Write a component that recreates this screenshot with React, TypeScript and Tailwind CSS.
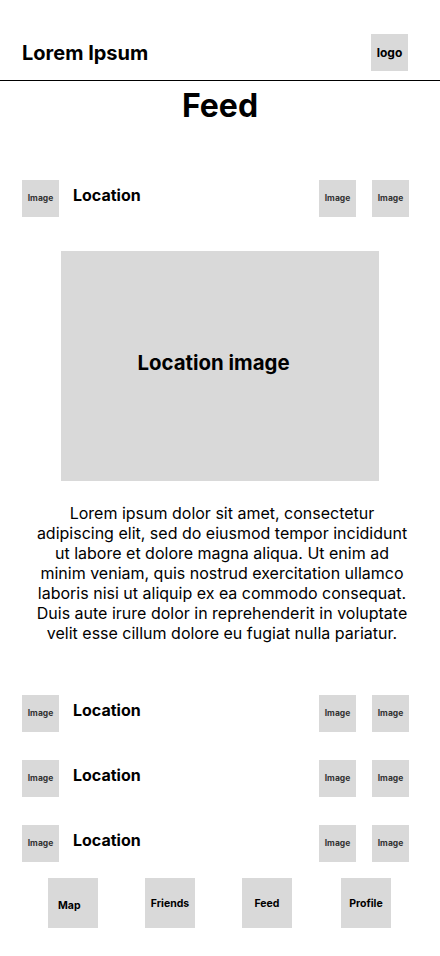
import React from 'react';

const font = { fontFamily: 'Inter, "Noto Sans", sans-serif' };

const Thumb = () => (
  <div className="w-[37px] h-[37px] bg-[#d9d9d9] flex items-center justify-center shrink-0">
    <span className="text-[8.5px] font-bold text-[#333]">Image</span>
  </div>
);

const LocationRow = () => (
  <div className="flex items-start pl-[22px] pr-[31px]">
    <Thumb />
    <span className="ml-[14px] mt-[3px] text-[16px] leading-6 font-bold text-black">Location</span>
    <div className="ml-auto flex gap-4">
      <Thumb />
      <Thumb />
    </div>
  </div>
);

const navItems = ['Map', 'Friends', 'Feed', 'Profile'];

export default function App() {
  return (
    <div className="w-[440px] h-[956px] bg-white overflow-hidden" style={font}>
      {/* header */}
      <div className="h-[81px] border-b border-black flex items-start justify-between pl-[22px] pr-[32px] pt-[34px]">
        <div className="h-[37px] flex items-center">
          <span className="text-[20px] font-bold text-black">Lorem Ipsum</span>
        </div>
        <div className="w-[37px] h-[37px] bg-[#d9d9d9] flex items-center justify-center">
          <span className="text-[12px] font-bold text-black">logo</span>
        </div>
      </div>

      <h1 className="mt-[5px] text-center text-[32px] leading-10 font-bold text-black">Feed</h1>

      <div className="mt-[54px]">
        <LocationRow />
      </div>

      <div className="mt-[34px] mx-auto w-[318px] h-[230px] bg-[#d9d9d9] flex items-center justify-center">
        <span className="mr-[13px] mb-[6px] text-[20.4px] font-bold text-black">Location image</span>
      </div>

      <p className="mt-[22px] ml-[35px] w-[374px] text-center text-[16px] leading-5 text-black">
        Lorem ipsum dolor sit amet, consectetur adipiscing elit, sed do eiusmod tempor incididunt ut labore et dolore magna aliqua. Ut enim ad minim veniam, quis nostrud exercitation ullamco laboris nisi ut aliquip ex ea commodo consequat. Duis aute irure dolor in reprehenderit in voluptate velit esse cillum dolore eu fugiat nulla pariatur.
      </p>

      <div className="mt-[52px] flex flex-col gap-[28px]">
        <LocationRow />
        <LocationRow />
        <LocationRow />
      </div>

      <div className="mt-[16px] flex pl-[48px]">
        {navItems.map((label, i) => (
          <div
            key={label}
            className={`w-[50px] h-[50px] bg-[#d9d9d9] flex items-center ${i === 0 ? 'justify-start pl-[10px] pt-[5px]' : 'justify-center pt-[2px]'} ${i === 1 ? 'ml-[47px]' : i === 2 ? 'ml-[47px]' : i === 3 ? 'ml-[49px]' : ''}`}
          >
            <span className="text-[10.5px] font-bold text-black">{label}</span>
          </div>
        ))}
      </div>
    </div>
  );
}
